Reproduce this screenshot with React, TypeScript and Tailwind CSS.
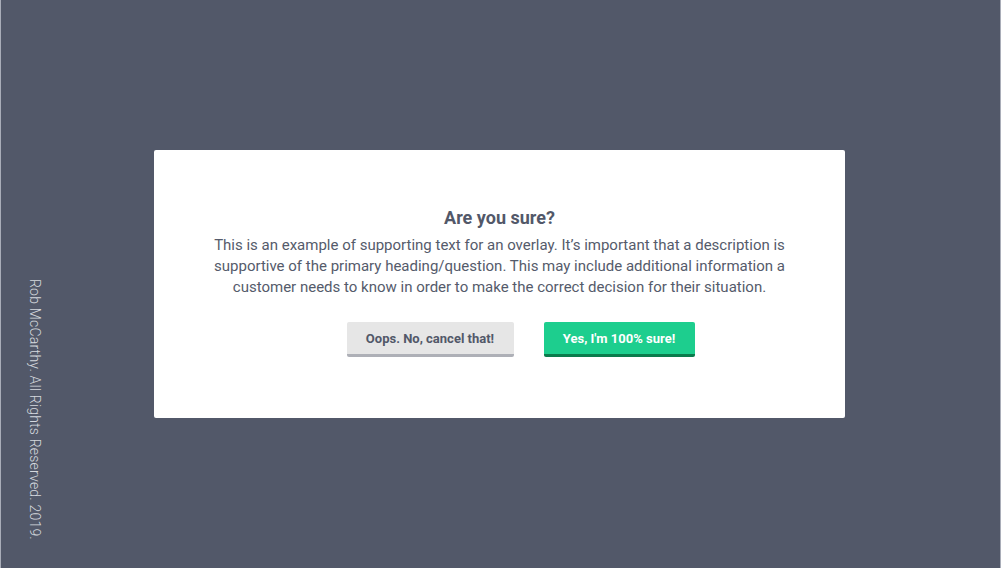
import React from "react";

export default function App() {
  return (
    <div
      className="h-[568px] w-full bg-[#525869] shadow-[inset_1px_0_#a9adb8,inset_-1px_0_#a9adb8] grid grid-cols-[154px_691px_1fr] grid-rows-[150px_268px_1fr]"
      style={{ fontFamily: "Roboto, 'Noto Sans', sans-serif" }}
    >
      <div className="row-start-1 row-end-4 col-start-1 flex items-end pl-[26px] pb-[28px]">
        <span className="[writing-mode:vertical-rl] text-[14px] font-light text-[#d5d8de] tracking-[0.2px] leading-[18px]">
          Rob McCarthy. All Rights Reserved. 2019.
        </span>
      </div>
      <div className="row-start-2 col-start-2 bg-white rounded-[2px] flex flex-col items-center pt-[57px] px-[56px]">
        <h1 className="text-[18px] font-bold text-[#525869] leading-[22px]">Are you sure?</h1>
        <p className="mt-[6px] text-[15px] leading-[21px] text-[#555b6b] text-center">
          This is an example of supporting text for an overlay. It’s important that a description is supportive of the primary heading/question. This may include additional information a customer needs to know in order to make the correct decision for their situation.
        </p>
        <div className="mt-[24px] ml-[42px] flex gap-[30px]">
          <button className="w-[167px] h-[35px] pt-[1px] bg-[#e6e6e6] border-b-[3px] border-[#aeb0b7] rounded-[2px] text-[13px] font-bold text-[#525869]">
            Oops. No, cancel that!
          </button>
          <button className="w-[151px] h-[35px] pt-[1px] bg-[#1dce8e] border-b-[3px] border-[#0a7b4c] rounded-[2px] text-[13px] font-bold text-white">
            Yes, I'm 100% sure!
          </button>
        </div>
      </div>
    </div>
  );
}
